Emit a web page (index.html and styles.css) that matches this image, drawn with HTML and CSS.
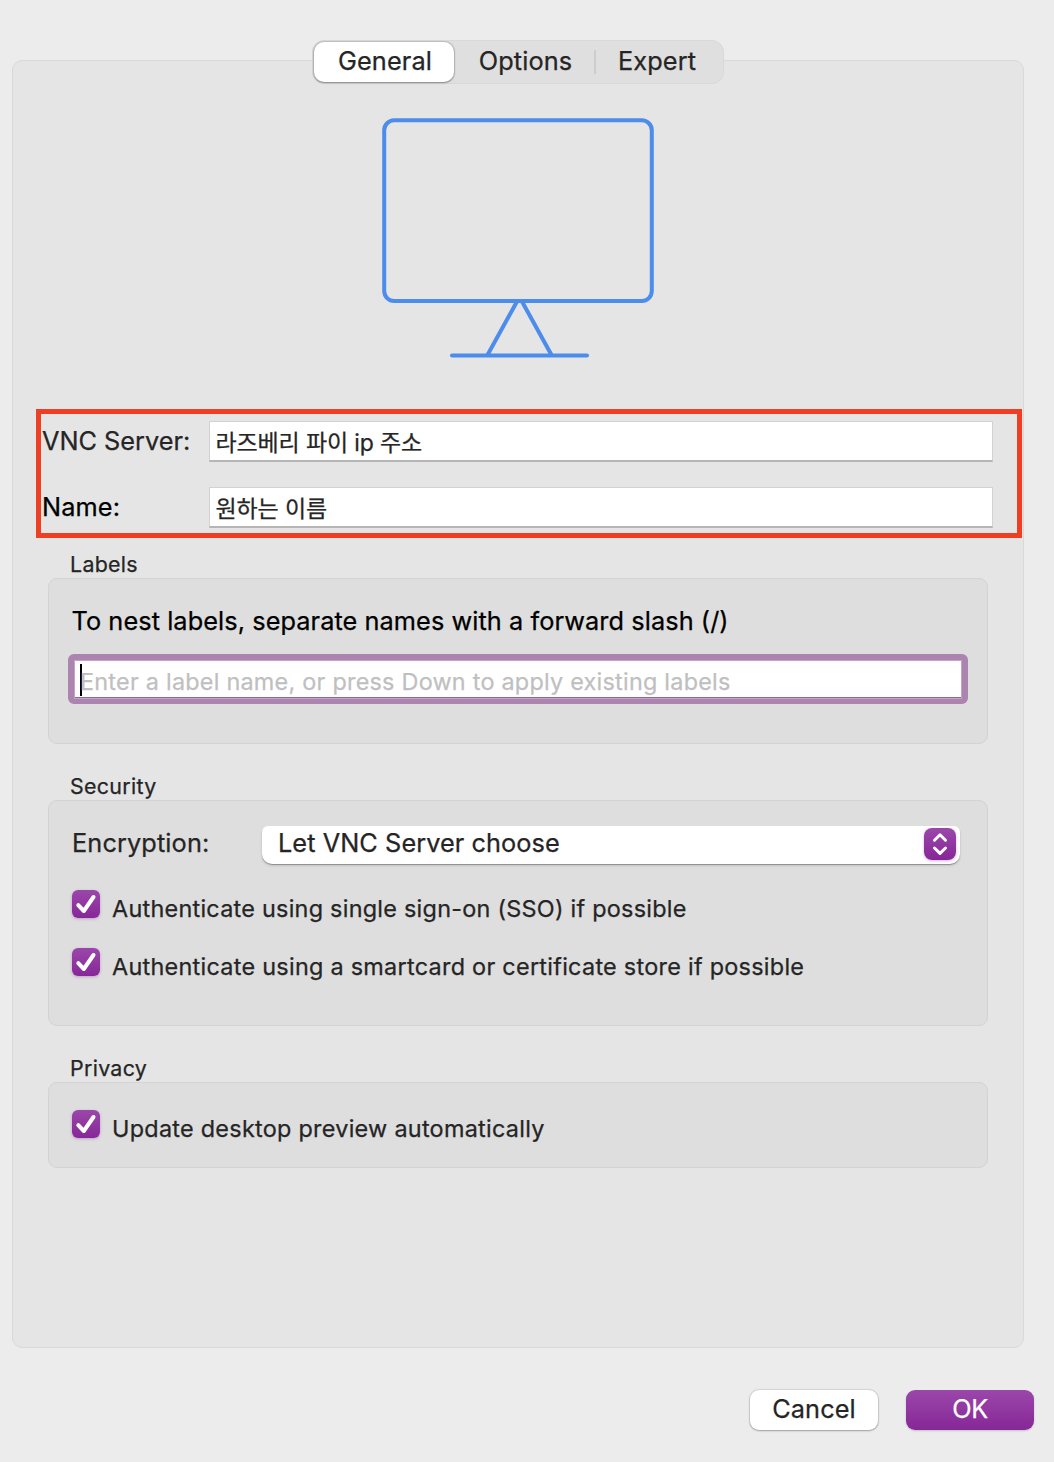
FILE: index.html
```html
<!DOCTYPE html>
<html lang="en">
<head>
<meta charset="utf-8">
<title>Properties</title>
<link rel="stylesheet" href="styles.css">
</head>
<body>
<main class="panel">
  <nav class="tabs">
    <span class="tab tab-active">General</span>
    <span class="tab tab-options">Options</span>
    <span class="tab-divider"></span>
    <span class="tab tab-expert">Expert</span>
  </nav>

  <svg class="monitor" width="274" height="244" viewBox="0 0 274 244" fill="none" stroke="#4c8ceb" stroke-width="4">
    <rect x="3.2" y="3.3" width="267.6" height="180.7" rx="10"/>
    <path d="M71 238.4H206" stroke-linecap="round"/>
    <path d="M106.500 238L136 184.500M141 184.500L170.500 238"/>
  </svg>

  <section class="address">
    <div class="field">
      <label class="field-label tight">VNC Server:</label>
      <div class="input">라즈베리 파이 ip 주소</div>
    </div>
    <div class="field">
      <label class="field-label dark">Name:</label>
      <div class="input">원하는 이름</div>
    </div>
  </section>

  <h2 class="group-title">Labels</h2>
  <section class="group group-labels">
    <p class="hint">To nest labels, separate names with a forward slash (/)</p>
    <div class="label-input"><span class="caret"></span><span class="placeholder">Enter a label name, or press Down to apply existing labels</span></div>
  </section>

  <h2 class="group-title">Security</h2>
  <section class="group group-security">
    <div class="encryption">
      <label class="encryption-label">Encryption:</label>
      <div class="select">
        <span>Let VNC Server choose</span>
        <span class="stepper">
          <svg width="32" height="32" viewBox="0 0 32 32" fill="none" stroke="#fff" stroke-width="3" stroke-linecap="round" stroke-linejoin="round"><path d="M10.500 12.200L16 6.800L21.500 12.200M10.500 20L16 25.400L21.500 20"/></svg>
        </span>
      </div>
    </div>
    <div class="check-row">
      <span class="checkbox"><svg width="28" height="28" viewBox="0 0 28 28" fill="none" stroke="#fff" stroke-width="4" stroke-linecap="round" stroke-linejoin="round"><path d="M6.300 15.200L11.800 21L21.500 7"/></svg></span>
      <span class="check-text">Authenticate using single sign-on (SSO) if possible</span>
    </div>
    <div class="check-row">
      <span class="checkbox"><svg width="28" height="28" viewBox="0 0 28 28" fill="none" stroke="#fff" stroke-width="4" stroke-linecap="round" stroke-linejoin="round"><path d="M6.300 15.200L11.800 21L21.500 7"/></svg></span>
      <span class="check-text wide">Authenticate using a smartcard or certificate store if possible</span>
    </div>
  </section>

  <h2 class="group-title">Privacy</h2>
  <section class="group group-privacy">
    <div class="check-row">
      <span class="checkbox"><svg width="28" height="28" viewBox="0 0 28 28" fill="none" stroke="#fff" stroke-width="4" stroke-linecap="round" stroke-linejoin="round"><path d="M6.300 15.200L11.800 21L21.500 7"/></svg></span>
      <span class="check-text wide">Update desktop preview automatically</span>
    </div>
  </section>
</main>

<footer class="actions">
  <div class="button">Cancel</div>
  <div class="button button-primary">OK</div>
</footer>
</body>
</html>
```
FILE: styles.css
```css
* {
  box-sizing: border-box;
}

body {
  margin: 0;
  height: 1462px;
  padding: 60px 20px 0 12px;
  background: #ececec;
  color: #252525;
  font-family: Inter, "Noto Sans CJK KR", sans-serif;
  font-size: 25.3px;
  letter-spacing: 0.12px;
  white-space: nowrap;
  -webkit-text-stroke: 0.25px;
}

.panel {
  display: flex;
  flex-direction: column;
  width: 1012px;
  height: 1288px;
  border: 1px solid #d9d9d9;
  border-radius: 10px;
  background: #e5e5e5;
}

.tabs {
  display: flex;
  align-items: center;
  align-self: center;
  width: 412px;
  height: 44px;
  margin-top: -21px;
  padding-left: 2px;
  border: 1px solid #d9d9d9;
  border-radius: 12px;
  background: #dfdfdf;
}

.tab {
  height: 40px;
  line-height: 38px;
  text-align: center;
}

.tab-active {
  width: 140px;
  margin-left: -1px;
  padding-left: 2px;
  border-radius: 10px;
  background: #fff;
  box-shadow: 0 0 1px 1px rgba(0, 0, 0, 0.14), 0 1px 2px rgba(0, 0, 0, 0.3);
}

.tab-options {
  width: 140px;
  padding-left: 3px;
}

.tab-divider {
  width: 2px;
  height: 24px;
  background: #cdcdcd;
}

.tab-expert {
  width: 122px;
}

.monitor {
  align-self: center;
  margin-top: 33px;
}

.address {
  display: flex;
  flex-direction: column;
  gap: 25px;
  height: 129px;
  margin: 48px 1px 0 23px;
  padding: 7px 24px 0 1px;
  border: 5px solid #ee3f24;
}

.field {
  display: flex;
}

.field-label {
  width: 167px;
  height: 41px;
  line-height: 40px;
}

.tight {
  letter-spacing: 0;
}

.dark {
  color: #000;
}

.input {
  flex: 1;
  height: 41px;
  padding-left: 5.5px;
  border: 1px solid #d2d2d2;
  border-bottom: 2px solid #b5b5b5;
  background: #fff;
  font-size: 23px;
  line-height: 42px;
  letter-spacing: -0.14px;
}

.group-title {
  height: 30px;
  margin: 11px 0 0 57px;
  font-size: 21.4px;
  font-weight: 400;
  line-height: 30px;
  letter-spacing: 0.3px;
}

.group {
  margin: -1px 35px 0;
  border: 1px solid #d3d3d3;
  border-radius: 9px;
  background: #dedede;
}

.group-labels {
  height: 166px;
  padding: 26px 19px 0;
}

.hint {
  height: 32px;
  margin: 0 0 17px 3.5px;
  color: #000;
  line-height: 32px;
  letter-spacing: 0.075px;
}

.label-input {
  display: flex;
  align-items: center;
  height: 50px;
  padding-left: 6px;
  border: 6px solid #ab84af;
  border-bottom-width: 5px;
  border-radius: 6px;
  background: #fff;
  box-shadow: inset 0 0 0 1px #c3a3c7, inset 0 -2px #8e6b95;
}

.caret {
  width: 2px;
  height: 32px;
  margin-top: 1px;
  background: #000;
}

.placeholder {
  margin: 4px 0 0 -2px;
  color: #bfbfbf;
  font-size: 23.4px;
  letter-spacing: 0.242px;
}

.group-labels + .group-title,
.group-security + .group-title {
  margin-top: 27px;
}

.group-security {
  height: 226px;
  padding: 25px 27px 0 23px;
}

.encryption {
  display: flex;
  height: 38px;
  margin-bottom: 26px;
  line-height: 34px;
}

.encryption-label {
  width: 190px;
}

.select {
  display: flex;
  flex: 1;
  justify-content: space-between;
  padding: 0 4px 0 16px;
  border-radius: 6px 6px 10px 10px;
  background: #fff;
  box-shadow: 0 1px 1px rgba(0, 0, 0, 0.3), 0 2px 3px rgba(0, 0, 0, 0.1);
  letter-spacing: 0.067px;
}

.stepper,
.checkbox {
  display: block;
  flex: none;
  background: linear-gradient(#9b47aa, #862797);
  box-shadow: 0 1px 3px rgba(134, 39, 151, 0.35);
}

.stepper {
  width: 32px;
  height: 32px;
  margin-top: 2px;
  border-radius: 8px;
}

.stepper svg,
.checkbox svg {
  display: block;
}

.check-row {
  display: flex;
  gap: 12px;
  height: 28px;
  margin-bottom: 30px;
}

.checkbox {
  width: 28px;
  height: 28px;
  border-radius: 6px;
}

.check-text {
  font-size: 23.4px;
  line-height: 37px;
  letter-spacing: 0.26px;
}

.wide {
  letter-spacing: 0.278px;
}

.group-privacy {
  height: 86px;
  padding: 27px 23px 0;
}

.actions {
  display: flex;
  gap: 28px;
  justify-content: flex-end;
  padding-top: 42px;
}

.button {
  width: 128px;
  height: 40px;
  border-radius: 9px;
  background: #fff;
  box-shadow: 0 0 1px 1px rgba(0, 0, 0, 0.1), 0 1px 2px rgba(0, 0, 0, 0.25);
  line-height: 38px;
  text-align: center;
}

.button-primary {
  background: linear-gradient(#9b47aa, #862797);
  box-shadow: 0 1px 2px rgba(0, 0, 0, 0.18);
  color: #fff;
  letter-spacing: -0.3px;
}
```
